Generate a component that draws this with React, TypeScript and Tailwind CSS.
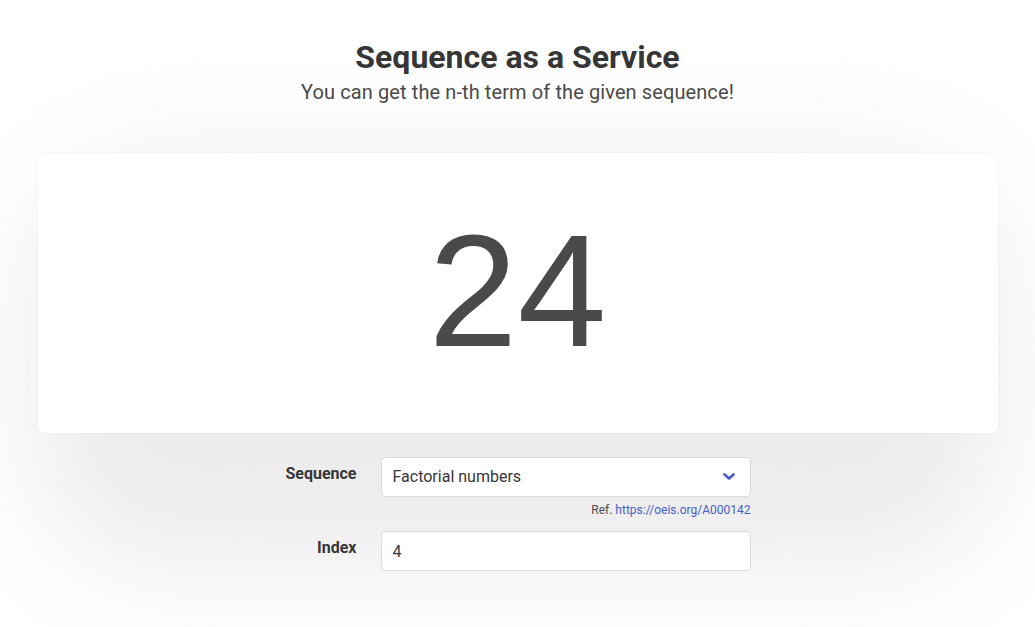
import React, { useState } from 'react';

const SEQUENCES = [
  { name: 'Factorial numbers', oeis: 'A000142' },
  { name: 'Fibonacci numbers', oeis: 'A000045' },
  { name: 'Prime numbers', oeis: 'A000040' },
];

function nthTerm(seq: string, n: number) {
  if (seq === 'A000142') {
    let r = 1;
    for (let i = 2; i <= n; i++) r *= i;
    return r;
  }
  if (seq === 'A000045') {
    let a = 0, b = 1;
    for (let i = 0; i < n; i++) [a, b] = [b, a + b];
    return a;
  }
  let count = 0;
  for (let k = 2; ; k++) {
    let prime = true;
    for (let d = 2; d * d <= k; d++) if (k % d === 0) { prime = false; break; }
    if (prime && ++count === n) return k;
  }
}

function Chevron({ className }: { className?: string }) {
  return (
    <svg viewBox="0 0 14 9" fill="none" stroke="currentColor" strokeWidth="2.8" strokeLinecap="round" strokeLinejoin="round" className={className}>
      <polyline points="2.5,2.5 7,6.5 11.5,2.5" />
    </svg>
  );
}

export default function App() {
  const [seq, setSeq] = useState('A000142');
  const [index, setIndex] = useState('4');
  const value = nthTerm(seq, Math.max(1, parseInt(index) || 1));

  return (
    <div className="relative isolate h-[627px] overflow-hidden bg-white font-['Roboto',sans-serif] text-[#4a4a4a]">
      {/* soft glow behind the card */}
      <div className="pointer-events-none absolute left-[30px] right-[30px] top-[160px] -z-10 h-[410px] rounded-[140px] bg-[#ececec] blur-[55px]" />

      {/* Header */}
      <div className="pt-[39px] text-center">
        <h1 className="text-[32px] font-bold leading-[36px] text-[#363636]">Sequence as a Service</h1>
        <p className="mt-[5px] text-[20px] leading-[25px] tracking-[0.1px] text-[#4a4a4a]">You can get the n-th term of the given sequence!</p>
      </div>

      {/* Result card */}
      <div className="mx-auto mt-[48px] flex h-[280px] w-[960px] items-center justify-center rounded-[7px] bg-white pb-[4px] shadow-[0_0_0_1px_rgba(10,10,10,0.02)]">
        <span className="font-['Liberation_Sans',Arial,sans-serif] text-[160px] leading-none text-[#4a4a4a]">{value}</span>
      </div>

      {/* Form */}
      <div className="mx-auto mt-[24px] w-[960px]">
        <div className="ml-[243px] w-[470px]">
          <div className="mb-[12px] flex">
            <label className="mr-[24px] flex-1 pt-[5px] text-right text-[16px] font-bold leading-[24px] text-[#363636]">Sequence</label>
            <div className="w-[370px]">
              <div className="relative">
                <select
                  value={seq}
                  onChange={(e) => setSeq(e.target.value)}
                  className="h-[40px] w-full appearance-none rounded-[4px] border border-[#dbdbdb] bg-white pl-[11px] pr-[40px] text-[16px] text-[#363636] outline-none"
                >
                  {SEQUENCES.map((s) => (
                    <option key={s.oeis} value={s.oeis}>{s.name}</option>
                  ))}
                </select>
                <Chevron className="pointer-events-none absolute right-[15px] top-[15px] h-[9px] w-[14px] text-[#485fc7]" />
              </div>
              <p className="mt-[4px] text-right text-[12px] leading-[18px] text-[#4a4a4a]">
                Ref. <a href="#" className="text-[#485fc7]">https://oeis.org/{seq}</a>
              </p>
            </div>
          </div>

          <div className="flex">
            <label className="mr-[24px] flex-1 pt-[5px] text-right text-[16px] font-bold leading-[24px] text-[#363636]">Index</label>
            <div className="w-[370px]">
              <input
                type="text"
                value={index}
                onChange={(e) => setIndex(e.target.value)}
                className="h-[40px] w-full rounded-[4px] border border-[#dbdbdb] bg-white px-[11px] text-[16px] text-[#363636] shadow-[inset_0_1px_2px_rgba(10,10,10,0.05)] outline-none"
              />
            </div>
          </div>
        </div>
      </div>
    </div>
  );
}
